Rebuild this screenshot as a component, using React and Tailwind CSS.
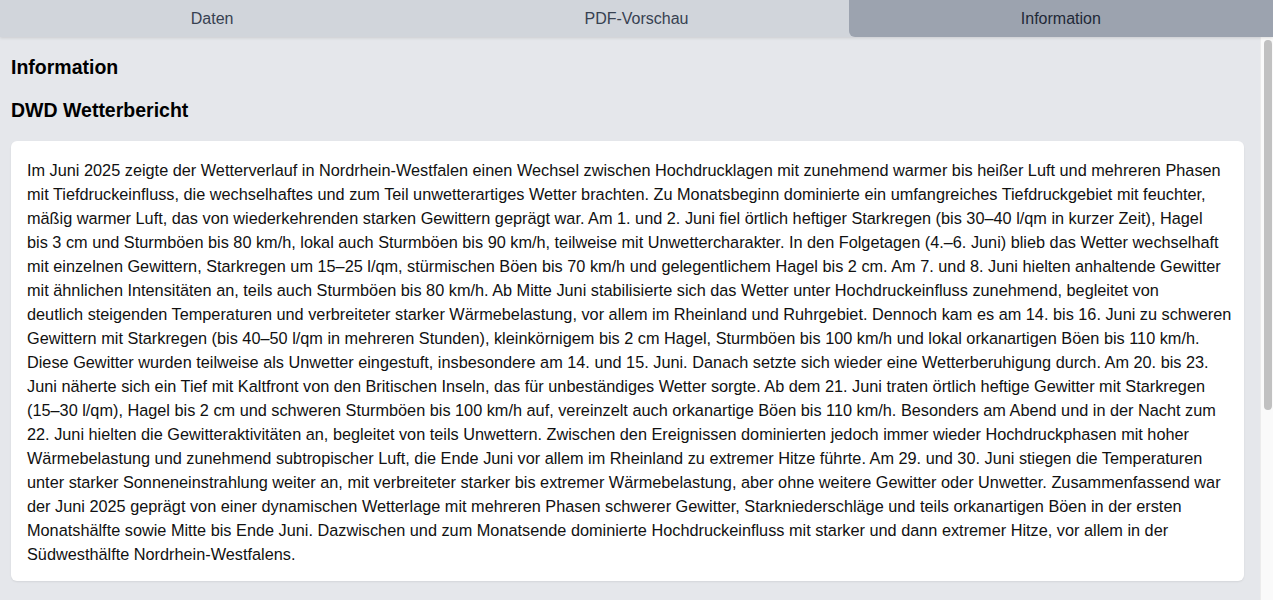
import React from "react";

const lines = [
  "Im Juni 2025 zeigte der Wetterverlauf in Nordrhein-Westfalen einen Wechsel zwischen Hochdrucklagen mit zunehmend warmer bis heißer Luft und mehreren Phasen",
  "mit Tiefdruckeinfluss, die wechselhaftes und zum Teil unwetterartiges Wetter brachten. Zu Monatsbeginn dominierte ein umfangreiches Tiefdruckgebiet mit feuchter,",
  "mäßig warmer Luft, das von wiederkehrenden starken Gewittern geprägt war. Am 1. und 2. Juni fiel örtlich heftiger Starkregen (bis 30–40 l/qm in kurzer Zeit), Hagel",
  "bis 3 cm und Sturmböen bis 80 km/h, lokal auch Sturmböen bis 90 km/h, teilweise mit Unwettercharakter. In den Folgetagen (4.–6. Juni) blieb das Wetter wechselhaft",
  "mit einzelnen Gewittern, Starkregen um 15–25 l/qm, stürmischen Böen bis 70 km/h und gelegentlichem Hagel bis 2 cm. Am 7. und 8. Juni hielten anhaltende Gewitter",
  "mit ähnlichen Intensitäten an, teils auch Sturmböen bis 80 km/h. Ab Mitte Juni stabilisierte sich das Wetter unter Hochdruckeinfluss zunehmend, begleitet von",
  "deutlich steigenden Temperaturen und verbreiteter starker Wärmebelastung, vor allem im Rheinland und Ruhrgebiet. Dennoch kam es am 14. bis 16. Juni zu schweren",
  "Gewittern mit Starkregen (bis 40–50 l/qm in mehreren Stunden), kleinkörnigem bis 2 cm Hagel, Sturmböen bis 100 km/h und lokal orkanartigen Böen bis 110 km/h.",
  "Diese Gewitter wurden teilweise als Unwetter eingestuft, insbesondere am 14. und 15. Juni. Danach setzte sich wieder eine Wetterberuhigung durch. Am 20. bis 23.",
  "Juni näherte sich ein Tief mit Kaltfront von den Britischen Inseln, das für unbeständiges Wetter sorgte. Ab dem 21. Juni traten örtlich heftige Gewitter mit Starkregen",
  "(15–30 l/qm), Hagel bis 2 cm und schweren Sturmböen bis 100 km/h auf, vereinzelt auch orkanartige Böen bis 110 km/h. Besonders am Abend und in der Nacht zum",
  "22. Juni hielten die Gewitteraktivitäten an, begleitet von teils Unwettern. Zwischen den Ereignissen dominierten jedoch immer wieder Hochdruckphasen mit hoher",
  "Wärmebelastung und zunehmend subtropischer Luft, die Ende Juni vor allem im Rheinland zu extremer Hitze führte. Am 29. und 30. Juni stiegen die Temperaturen",
  "unter starker Sonneneinstrahlung weiter an, mit verbreiteter starker bis extremer Wärmebelastung, aber ohne weitere Gewitter oder Unwetter. Zusammenfassend war",
  "der Juni 2025 geprägt von einer dynamischen Wetterlage mit mehreren Phasen schwerer Gewitter, Starkniederschläge und teils orkanartigen Böen in der ersten",
  "Monatshälfte sowie Mitte bis Ende Juni. Dazwischen und zum Monatsende dominierte Hochdruckeinfluss mit starker und dann extremer Hitze, vor allem in der",
  "Südwesthälfte Nordrhein-Westfalens.",
];

const tabs = ["Daten", "PDF-Vorschau", "Information"];

export default function App() {
  return (
    <div
      className="h-[600px] w-full flex flex-col bg-[#e5e7eb] overflow-hidden"
      style={{ fontFamily: '"Liberation Sans", Arial, sans-serif' }}
    >
      <div className="relative z-10 h-[37px] shrink-0 grid grid-cols-3 bg-[#d1d5db] shadow-[0_1px_3px_rgba(0,0,0,0.12)]">
        {tabs.map((t, i) => (
          <div
            key={t}
            className={
              i === 2
                ? "flex items-center justify-center bg-[#9ca3af] rounded-bl-md text-[16px] text-[#1f2937]"
                : "flex items-center justify-center text-[16px] text-[#374151]"
            }
          >
            {t}
          </div>
        ))}
      </div>
      <div className="flex-1 min-h-0 flex">
        <div className="flex-1 min-w-0 overflow-hidden pl-[11px] pr-4 pt-4">
          <h1 className="text-[19.5px] leading-7 font-bold text-black mb-[15px]">Information</h1>
          <h2 className="text-[19.5px] leading-7 font-bold text-black mb-[17px]">DWD Wetterbericht</h2>
          <div className="bg-white rounded-md shadow-[0_1px_2px_rgba(0,0,0,0.08)] px-4 pt-[17px] pb-[15px]">
            <p className="text-[16.3px] leading-6 text-[#111111]">
              {lines.map((l, i) => (
                <span key={i} className="block whitespace-nowrap">
                  {l}
                </span>
              ))}
            </p>
          </div>
        </div>
        <div className="w-[13px] shrink-0 bg-[#fafafa] border-l border-[#ececec] pt-[3px]" aria-hidden="true">
          <div className="ml-[3px] w-[8px] h-[370px] rounded-full bg-[#c1c1c1]"></div>
        </div>
      </div>
    </div>
  );
}
